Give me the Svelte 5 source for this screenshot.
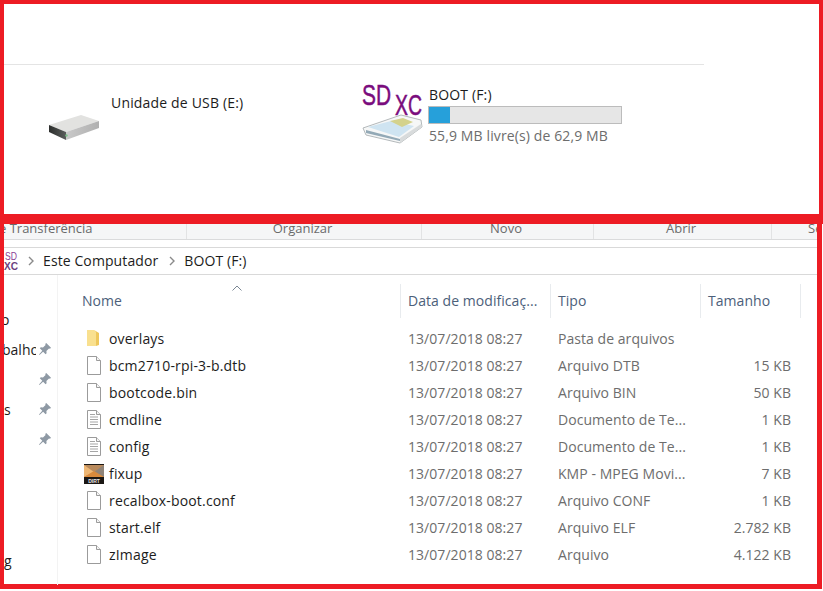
<script>
  const pinRows = [
    { label: 'o', pin: false, indent: -3 },
    { label: 'balho', pin: true, indent: -2 },
    { label: '', pin: true, indent: 0 },
    { label: 's', pin: true, indent: 0 },
    { label: '', pin: true, indent: 0 }
  ];
  const files = [
    { name: 'overlays', icon: 'folder', type: 'Pasta de arquivos', size: '' },
    { name: 'bcm2710-rpi-3-b.dtb', icon: 'file', type: 'Arquivo DTB', size: '15 KB' },
    { name: 'bootcode.bin', icon: 'file', type: 'Arquivo BIN', size: '50 KB' },
    { name: 'cmdline', icon: 'text', type: 'Documento de Te...', size: '1 KB' },
    { name: 'config', icon: 'text', type: 'Documento de Te...', size: '1 KB' },
    { name: 'fixup', icon: 'media', type: 'KMP - MPEG Movi...', size: '7 KB' },
    { name: 'recalbox-boot.conf', icon: 'file', type: 'Arquivo CONF', size: '1 KB' },
    { name: 'start.elf', icon: 'file', type: 'Arquivo ELF', size: '2.782 KB' },
    { name: 'zImage', icon: 'file', type: 'Arquivo', size: '4.122 KB' }
  ];
  const ribbon = [
    { label: 'e Transferência', w: 183, align: 'left' },
    { label: 'Organizar', w: 235, align: 'center' },
    { label: 'Novo', w: 172, align: 'center' },
    { label: 'Abrir', w: 178, align: 'center' },
    { label: 'Se', w: 45, align: 'right' }
  ];
</script>

<div class="page">
  <section class="top">
    <div class="nav-space"></div>
    <div class="drives">
      <div class="drive usb">
        <svg class="usb-icon" viewBox="0 0 52 27" width="52" height="27" aria-hidden="true">
          <defs>
            <linearGradient id="usbFront" x1="0" x2="1" y1="0" y2="0">
              <stop offset="0" stop-color="#2c2e2d" />
              <stop offset="1" stop-color="#5a5d5b" />
            </linearGradient>
            <linearGradient id="usbSide" x1="0" x2="1" y1="0" y2="0">
              <stop offset="0" stop-color="#c9c9c9" />
              <stop offset="1" stop-color="#b0b0b0" />
            </linearGradient>
          </defs>
          <polygon points="0,10 32,0 50,6 17,17" fill="#e2e2e0" />
          <polygon points="17,17 50,6 50,13 17,25" fill="url(#usbSide)" />
          <polygon points="0,10 17,17 17,25 0,17" fill="url(#usbFront)" />
          <circle cx="17.500" cy="20.500" r="1.200" fill="#7cc08a" />
        </svg>
        <div class="usb-name">Unidade de USB (E:)</div>
      </div>
      <div class="drive sd">
        <svg class="sd-icon" viewBox="0 0 64 64" width="64" height="64" aria-hidden="true">
          <text class="sd-word" x="0" y="22" textLength="29" lengthAdjust="spacingAndGlyphs">SD</text>
          <text class="sd-word" x="33" y="32" textLength="27" lengthAdjust="spacingAndGlyphs">XC</text>
          <polygon points="1,45 39,32 59,37 60,44 38,60 4,52" fill="#f6f7f7" stroke="#b4b9bb" stroke-width="1" stroke-linejoin="round" />
          <polygon points="6,44 29,38 52,43 37,54" fill="#cfe4f1" />
          <polygon points="28,38 41,35 51,39 40,44" fill="#d4d28c" />
          <polygon points="4,47 38,56 38,58 4,50" fill="#93a9b6" />
          <polygon points="38,60 60,44 59,41 38,55" fill="#d8dbdc" />
        </svg>
        <div class="sd-text">
          <div class="sd-name">BOOT (F:)</div>
          <div class="bar"><div class="fill" style="width: {(7 / 62.9) * 100}%"></div></div>
          <div class="free">55,9 MB livre(s) de 62,9 MB</div>
        </div>
      </div>
    </div>
  </section>

  <section class="bottom">
    <div class="ribbon">
      {#each ribbon as group}
        <div class="group {group.align}" style="width: {group.w}px">{group.label}</div>
      {/each}
    </div>
    <div class="address">
      <svg class="mini-sd" viewBox="0 0 14 20" width="14" height="20" aria-hidden="true">
        <text class="mini-word" x="1" y="9" textLength="12" lengthAdjust="spacingAndGlyphs">SD</text>
        <text class="mini-word dark" x="0" y="19" textLength="14" lengthAdjust="spacingAndGlyphs">XC</text>
      </svg>
      <svg class="chev first" viewBox="0 0 6 10" width="6" height="10" aria-hidden="true"><path d="M1 1l4 4-4 4" /></svg>
      <span>Este Computador</span>
      <svg class="chev" viewBox="0 0 6 10" width="6" height="10" aria-hidden="true"><path d="M1 1l4 4-4 4" /></svg>
      <span>BOOT (F:)</span>
    </div>
    <div class="main">
      <nav class="side">
        {#each pinRows as row}
          <div class="side-row">
            <span class="side-label" style="text-indent: {row.indent}px">{row.label}</span>
            {#if row.pin}
              <svg class="pin" viewBox="0 0 14 14" width="14" height="14" aria-hidden="true">
                <path d="M8.200 1l4.800 4.800-1 1-1-.4-2.600 2.600.2 2.200-1 1-2.500-2.500L1.500 13l-.5-.5 3.300-3.700L1.800 6.300l1-1 2.200.2 2.600-2.600-.4-1z" fill="#8e99a4" />
              </svg>
            {/if}
          </div>
        {/each}
        <div class="side-row last"><span class="side-label">g</span></div>
      </nav>
      <div class="list">
        <div class="head">
          <svg class="sort" viewBox="0 0 10 6" width="10" height="6" aria-hidden="true"><path d="M.5 5.500L5 1l4.500 4.500" /></svg>
          <div class="hcell">Nome</div>
          <div class="hcell">Data de modificaç...</div>
          <div class="hcell">Tipo</div>
          <div class="hcell">Tamanho</div>
        </div>
        {#each files as f}
          <div class="row">
            <div class="name">
              <span class="ico">
                {#if f.icon === 'folder'}
                  <svg viewBox="0 0 20 20" width="20" height="20" aria-hidden="true">
                    <path d="M3 1h7l2 1.500v14.500H3z" fill="#f9e08f" />
                    <path d="M10 1l5 3v12l-3 1V3z" fill="#eec75c" />
                  </svg>
                {:else if f.icon === 'media'}
                  <svg viewBox="0 0 20 20" width="20" height="20" aria-hidden="true">
                    <rect width="20" height="20" fill="#1b1714" />
                    <polygon points="0,1 20,1 20,13 0,13" fill="#b98a5c" />
                    <polygon points="0,1 10,8 0,13" fill="#eeb775" />
                    <polygon points="20,1 10,8 20,13" fill="#8f8378" />
                    <polygon points="0,13 10,7 20,13" fill="#d98a3c" />
                    <text class="media-word" x="10" y="18.500" text-anchor="middle">DIRT</text>
                  </svg>
                {:else}
                  <svg viewBox="0 0 20 20" width="20" height="20" aria-hidden="true">
                    <path class="sheet" d="M3.500 .5h9l4 4v14h-13z" />
                    <path class="fold" d="M12.500 .5v4h4" />
                    {#if f.icon === 'text'}
                      <path class="lines" d="M6 4.500h5M6 7h8M6 9.500h8M6 12h8M6 14.500h8" />
                    {/if}
                  </svg>
                {/if}
              </span>
              <span class="fname">{f.name}</span>
            </div>
            <div class="cell">13/07/2018 08:27</div>
            <div class="cell">{f.type}</div>
            <div class="cell size">{f.size}</div>
          </div>
        {/each}
      </div>
    </div>
  </section>
</div>

<style>
  :global(body) {
    margin: 0;
    background: #fff;
  }
  .page {
    width: 823px;
    height: 591px;
    overflow: hidden;
    font-family: "Open Sans", "Noto Sans", sans-serif;
    font-size: 14px;
    color: #1c1c1c;
    background: #fff;
  }
  .top {
    box-sizing: border-box;
    height: 224px;
    border: 4px solid #ed1c24;
    border-bottom-width: 10px;
  }
  .nav-space {
    width: 700px;
    height: 60px;
    border-bottom: 1px solid #e4e4e4;
  }
  .drives {
    display: flex;
  }
  .drive {
    display: flex;
  }
  .usb {
    width: 358px;
    padding: 28px 0 0 45px;
    box-sizing: border-box;
  }
  .usb-icon {
    margin: 22px 10px 0 0;
    flex: none;
  }
  .usb-name {
    line-height: 20px;
    letter-spacing: 0.17px;
  }
  .sd {
    padding-top: 18px;
  }
  .sd-icon {
    flex: none;
    margin-right: 2px;
  }
  .sd-word {
    font-family: "Liberation Sans", sans-serif;
    font-size: 29px;
    fill: #7a0c7d;
    stroke: #7a0c7d;
    stroke-width: 0.5px;
  }
  .sd-text {
    padding-top: 4px;
  }
  .sd-name {
    line-height: 16px;
    padding-left: 1px;
    letter-spacing: 0.15px;
  }
  .bar {
    box-sizing: border-box;
    width: 194px;
    height: 18px;
    margin-top: 3px;
    background: #e6e6e6;
    border: 1px solid #bcbcbc;
  }
  .fill {
    height: 100%;
    background: #26a0da;
  }
  .free {
    margin-top: 2px;
    padding-left: 1px;
    line-height: 20px;
    color: #6d6d6d;
    letter-spacing: 0.12px;
  }
  .bottom {
    box-sizing: border-box;
    width: 822px;
    height: 365px;
    border: 4px solid #ed1c24;
    border-top: 0;
    border-right-width: 5px;
    border-bottom-width: 5px;
  }
  .ribbon {
    display: flex;
    height: 15px;
    overflow: hidden;
    background: #f5f6f7;
    border-bottom: 1px solid #dadbdc;
    font-size: 13px;
    line-height: 9px;
    color: #6a6a6a;
  }
  .group {
    flex: none;
    box-sizing: border-box;
    height: 15px;
    border-right: 1px solid #e2e3e4;
    white-space: nowrap;
    overflow: hidden;
  }
  .group.left { text-indent: -5px; }
  .group.center { text-align: center; padding-right: 3px; }
  .group.right { text-align: left; padding-left: 36px; border-right: 0; }
  .address {
    display: flex;
    align-items: center;
    box-sizing: border-box;
    height: 35px;
    padding-top: 7px;
    border-bottom: 1px solid #d9d9d9;
    background: linear-gradient(#fff 7px, #d9d9d9 7px, #d9d9d9 8px, #fff 8px);
  }
  .mini-sd {
    flex: none;
    margin-right: 8px;
  }
  .mini-word {
    font-family: "Liberation Sans", sans-serif;
    font-size: 11px;
    fill: #8a3f95;
  }
  .mini-word.dark {
    fill: #6b3f80;
    font-weight: 700;
  }
  .chev {
    flex: none;
    margin-right: 9px;
    fill: none;
    stroke: #8a8a8a;
    stroke-width: 1.400;
  }
  .chev.first {
    margin-left: 2px;
    margin-right: 9px;
  }
  .address span {
    margin-right: 11px;
    letter-spacing: 0.1px;
  }
  .address span:last-child { margin-right: 0; }
  .main {
    display: flex;
    height: 310px;
  }
  .side {
    flex: none;
    box-sizing: border-box;
    width: 54px;
    padding-top: 29px;
    border-right: 1px solid #f3f3f3;
    display: flex;
    flex-direction: column;
  }
  .side-row {
    display: flex;
    align-items: center;
    justify-content: space-between;
    height: 30px;
    padding-right: 5px;
    box-sizing: border-box;
  }
  .side-row.last {
    margin-top: 91px;
  }
  .side-label {
    width: 32px;
    overflow: hidden;
    white-space: nowrap;
  }
  .pin {
    flex: none;
    margin-left: auto;
  }
  .list {
    flex: 1;
    min-width: 0;
  }
  .head {
    position: relative;
    display: grid;
    grid-template-columns: 343px 150px 150px 100px;
    height: 50px;
    padding-top: 9px;
    box-sizing: border-box;
  }
  .sort {
    position: absolute;
    left: 174px;
    top: 10px;
    fill: none;
    stroke: #7b8794;
  }
  .hcell {
    height: 34px;
    line-height: 34px;
    padding-left: 7px;
    color: #4c607a;
    border-right: 1px solid #e8ebee;
    letter-spacing: 0.05px;
    white-space: nowrap;
    overflow: hidden;
  }
  .hcell:first-of-type {
    padding-left: 24px;
  }
  .row {
    display: grid;
    grid-template-columns: 342px 150px 150px 91px;
    height: 27px;
    align-items: center;
  }
  .name {
    display: flex;
    align-items: center;
    padding-left: 26px;
  }
  .ico {
    display: flex;
    flex: none;
    width: 20px;
    height: 20px;
    margin-right: 5px;
  }
  .media-word {
    font-family: "Liberation Sans", sans-serif;
    font-size: 5px;
    font-weight: 700;
    fill: #e8e8e8;
  }
  .sheet {
    fill: #fff;
    stroke: #9b9b9b;
  }
  .fold {
    fill: #f4f4f4;
    stroke: #9b9b9b;
  }
  .lines {
    fill: none;
    stroke: #a5a5a5;
  }
  .fname {
    letter-spacing: 0.17px;
  }
  .cell {
    padding-left: 8px;
    color: #6d6d6d;
    white-space: nowrap;
    letter-spacing: 0.05px;
  }
  .size {
    text-align: right;
    padding: 0;
  }
</style>
